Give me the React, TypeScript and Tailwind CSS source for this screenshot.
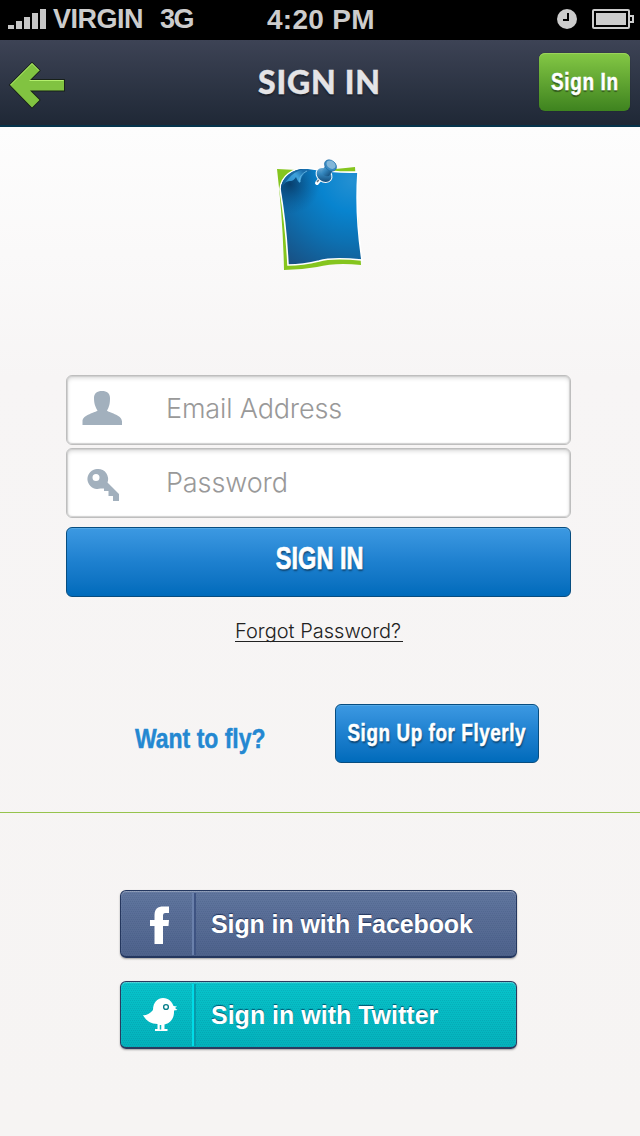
import React from "react";

const arial = "font-['Liberation_Sans',Arial,sans-serif]";
const narrow = `${arial} font-bold`;
const light = "font-['Inter','Roboto',sans-serif] font-light";

function StatusBar() {
  return (
    <div className={`flex h-10 items-start bg-black text-[27px] leading-[39px] font-bold text-[#cccccc] ${arial}`}>
      <svg className="mt-[9px] ml-2 h-5 w-[38px]" viewBox="0 0 38 20" fill="#c6c6c6" shapeRendering="crispEdges">
        <rect x="0" y="16" width="6" height="4" />
        <rect x="8" y="12" width="6" height="8" />
        <rect x="16" y="8" width="6" height="12" />
        <rect x="24" y="4" width="6" height="16" />
        <rect x="32" y="0" width="6" height="20" />
      </svg>
      <span className="ml-[7px] w-[107px] whitespace-nowrap tracking-[-0.5px]">VIRGIN</span>
      <span className="w-[107px] tracking-[-1.5px]">3G</span>
      <span className="w-[290px] text-[28px] whitespace-nowrap tracking-[0.3px]">4:20 PM</span>
      <svg className="mt-[9px] h-[21px] w-[21px]" viewBox="0 0 21 21">
        <circle cx="10" cy="10" r="10" fill="#cccccc" />
        <path d="M11 4V11H6" fill="none" stroke="#000" strokeWidth="2" />
      </svg>
      <svg className="mt-[9px] ml-[14px] h-[21px] w-[43px]" viewBox="0 0 43 21">
        <rect x="1" y="1" width="36" height="18" rx="1" fill="none" stroke="#cccccc" strokeWidth="2" />
        <rect x="4" y="4" width="30" height="12" fill="#cccccc" />
        <path d="M38 7h3v6h-3" fill="none" stroke="#cccccc" strokeWidth="2" />
      </svg>
    </div>
  );
}

function NavBar() {
  return (
    <header className="flex h-[87px] items-start border-b-2 border-[#06344c] bg-linear-to-b from-[#3d4355] to-[#1f2836]">
      <svg className="mt-[21px] ml-[8px] h-[48px] w-[60px]" viewBox="0 0 60 48">
        <path d="M2 24 24 2l7.500 7.500L22 19H56v10.500H22L31.500 39 24 46.500Z" fill="#81c341" stroke="#172018" strokeWidth="1.800" paintOrder="stroke" />
        <path d="M2.500 24 24 2.500l7 7M21.500 19.500H55.500" fill="none" stroke="#b4f06d" strokeWidth="1" />
      </svg>
      <h1 className="mt-[22px] ml-[190px] w-[281px] font-['Lato',sans-serif] text-[32px] leading-10 font-black tracking-[0.8px] whitespace-nowrap text-[#e4e4e6] text-shadow-[0_2px_2px_rgba(0,0,0,.4)] [-webkit-text-stroke:0.4px_#e4e4e6]">
        SIGN IN
      </h1>
      <button className={`mt-[13px] flex h-[58px] w-[91px] items-center justify-center rounded-[6px] bg-linear-to-b from-[#84c845] to-[#3e831f] text-[24px] whitespace-nowrap text-white shadow-[inset_0_1px_0_#9bd35b,0_0_1px_#172018] text-shadow-[0_2px_1px_rgba(0,0,0,.4)] ${narrow}`}>
        <span className="ml-px scale-x-[0.79] tracking-[0.8px] [-webkit-text-stroke:0.5px_#fff]">Sign In</span>
      </button>
    </header>
  );
}

function NoteLogo() {
  return (
    <svg className="mt-[28px] ml-[270px] h-[120px] w-[100px]" viewBox="270 155 100 120">
      <defs>
        <radialGradient id="paper" gradientUnits="userSpaceOnUse" cx="352" cy="180" r="105">
          <stop offset="0" stopColor="#2490d2" />
          <stop offset=".3" stopColor="#0884cf" />
          <stop offset=".6" stopColor="#0d70b1" />
          <stop offset="1" stopColor="#184f82" />
        </radialGradient>
        <linearGradient id="fold" gradientUnits="userSpaceOnUse" x1="282" y1="188" x2="303" y2="171">
          <stop offset="0" stopColor="#0d4f82" />
          <stop offset=".3" stopColor="#2b8fcf" />
          <stop offset=".7" stopColor="#3fa2db" />
          <stop offset="1" stopColor="#1a6dab" />
        </linearGradient>
        <radialGradient id="shade" gradientUnits="userSpaceOnUse" cx="290" cy="184" r="30">
          <stop offset="0" stopColor="#062f57" stopOpacity=".75" />
          <stop offset="1" stopColor="#0b4a80" stopOpacity="0" />
        </radialGradient>
        <linearGradient id="pin" x1="0" y1="0" x2="1" y2="1">
          <stop offset="0" stopColor="#8abde0" />
          <stop offset=".45" stopColor="#3487be" />
          <stop offset="1" stopColor="#07345e" />
        </linearGradient>
      </defs>
      <path d="M277 169q20 1 35 2 25-2 43-4l6 98q-25-3-44 2-17 3-33 3Q283 220 277 169Z" fill="#85c51e" />
      <path d="M280 189c1-13 13-21 26-21q30 5 52 4-3 42 4 88-30-3-43 1-16 4-31 4-2-40-8-76Z" fill="url(#paper)" stroke="#fff" strokeWidth="1.600" />
      <path d="M281 189c1-12 13-20 25-20q30 5 51 4l3 87q-30-3-42 1-16 3-29 3-2-40-8-75Z" fill="url(#shade)" />
      <path d="M281 190c0-11 9-20 22-21 4 0 7 1 9 2-6-.5-11 4-12 12-2-1-3-4-4-6-2 3-4 4.500-6 4-5 0-7 4-9 9Z" fill="url(#fold)" />
      <path d="M281 190c0-11 9-20 22-21-6 2-11 5-14 9-3 3-6 7-8 12Z" fill="#0b5089" opacity=".65" />
      <path d="M300 182c-1-4 1-8 7-11" fill="none" stroke="#69bde8" strokeWidth="1" opacity=".8" />
      <path d="m317 183 4-5" stroke="#fff" strokeWidth="4" strokeLinecap="round" />
      <path d="m317 182 5-6" stroke="#69747d" strokeWidth="1.500" />
      <ellipse cx="324" cy="175" rx="8.600" ry="6.800" transform="rotate(38 324 175)" fill="url(#pin)" stroke="#fff" strokeWidth="1" />
      <path d="m321 172 6-9 7 6-5 7q-6 1-8-4Z" fill="url(#pin)" />
      <ellipse cx="330.500" cy="165.500" rx="6.600" ry="5" transform="rotate(38 330.500 165.500)" fill="#3989c1" stroke="#1b6aa4" strokeWidth=".6" />
      <ellipse cx="331" cy="164.700" rx="5" ry="3.700" transform="rotate(38 331 164.700)" fill="#82b6d8" />
    </svg>
  );
}

function Field({ label, children, text }: { label: string; text: string; children: React.ReactNode }) {
  return (
    <label className="flex h-[70px] items-center rounded-[6px] border border-[#bebebe] bg-white px-px shadow-[inset_0_0_1px_1px_#d0d0d0,inset_0_2px_4px_#d8d8d8]">
      <span className="flex w-[98px] shrink-0 pl-[14px]">{children}</span>
      <span className={`text-[27px] leading-8 whitespace-nowrap text-[#999999] ${light} ${text}`}>{label}</span>
    </label>
  );
}

function SocialButton({ color, divider, label, text, children }: { color: string; divider: string; label: string; text: string; children: React.ReactNode }) {
  return (
    <button className={`relative flex h-[68px] w-[397px] items-center overflow-hidden rounded-[6px] border border-b-2 text-left shadow-[inset_0_1px_1px_rgba(255,255,255,.35),0_1px_2px_rgba(0,0,0,.35)] ${color}`}>
      <svg className="absolute inset-0 h-full w-full opacity-10">
        <defs>
          <pattern id="weave" width="4" height="4" patternUnits="userSpaceOnUse">
            <path d="M0 0h1v1H0zM2 0h1v1H2zM1 2h1v1H1zM3 2h1v1H3z" fill="#102f55" />
          </pattern>
        </defs>
        <rect width="100%" height="100%" fill="url(#weave)" />
      </svg>
      <span className="relative flex h-[66px] w-[71px] shrink-0">{children}</span>
      <span className={`relative h-[62px] w-[4px] shrink-0 border-x-2 ${divider}`} />
      <span className={`relative mt-[2px] ml-[15px] text-[25px] font-bold whitespace-nowrap text-white text-shadow-[0_-1px_1px_rgba(0,20,60,.6)] ${arial} ${text}`}>{label}</span>
    </button>
  );
}

const blueButton = "flex items-center justify-center rounded-[6px] border border-[#074d80] bg-linear-to-b from-[#3c99e2] via-[#1d80cf] to-[#006bbb] whitespace-nowrap text-white shadow-[inset_0_1px_0_#53a8e5] text-shadow-[1px_2px_2px_rgba(0,0,0,.45)]";

export default function App() {
  return (
    <div className="h-[1136px] w-[640px] overflow-hidden bg-[#f6f4f3]">
      <StatusBar />
      <NavBar />
      <main className="flex h-[1009px] flex-col bg-linear-to-b from-[#fdfdfd] via-[#f7f5f5] via-25% to-[#f6f4f3]">
        <NoteLogo />
        <section className="mt-[100px] ml-[66px] flex w-[505px] flex-col">
          <Field label="Email Address" text="-mt-[3px] tracking-[-0.15px]">
            <svg className="-mt-1 h-[35px] w-[40px]" viewBox="0 0 40 35" fill="#a2b0bd">
              <path d="M20 0c5 0 8 2.500 8 7 0 6-1 9-3 12.500 1 2 15 4 15 11V34H.500v-3.500c0-7 13.500-9 15-11C13.500 16 12 13 12 7c0-4.500 3-7 8-7Z" />
            </svg>
          </Field>
          <div className="h-[3px]" />
          <Field label="Password" text="-mt-[1px] tracking-[-0.1px]">
            <svg className="mt-1 ml-[5px] h-[33px] w-[33px]" viewBox="0 0 33 33" fill="#a2b0bd">
              <path fillRule="evenodd" d="M11 0a10 10 0 0 1 9.500 13.500L32 25v7h-6v-5h-4.500v-5H17v-2.500h-3.500A10 10 0 1 1 11 0ZM9 5a3.500 3.500 0 1 0 0 7 3.500 3.500 0 0 0 0-7Z" />
            </svg>
          </Field>
          <button className={`mt-[9px] h-[70px] pb-[5px] text-[31px] ${blueButton} ${narrow}`}>
            <span className="ml-[3px] scale-x-[0.76] [-webkit-text-stroke:0.7px_#fff]">SIGN IN</span>
          </button>
          <a className={`mt-[20px] ml-[169px] flex h-[25px] w-[168px] border-b border-[#222] text-[20px] leading-[28px] whitespace-nowrap text-[#222] ${light}`}>Forgot Password?</a>
        </section>
        <section className="mt-[62px] flex h-[59px] items-start">
          <span className={`mt-[17px] ml-[135px] w-[200px] origin-left scale-x-[0.82] text-[28px] leading-9 whitespace-nowrap text-[#2488d1] text-shadow-[0_0_3px_#fff] [-webkit-text-stroke:0.5px_#2488d1] ${narrow}`}>Want to fly?</span>
          <button className={`h-[59px] w-[204px] pb-[2px] text-[24px] ${blueButton} ${narrow}`}>
            <span className="scale-x-[0.785] tracking-[0.75px] [-webkit-text-stroke:0.5px_#fff]">Sign Up for Flyerly</span>
          </button>
        </section>
        <div className="mt-[49px] h-px shrink-0 bg-[#96c34d]" />
        <section className="mt-[77px] ml-[120px] flex flex-col gap-[23px]">
          <SocialButton label="Sign in with Facebook" text="tracking-[-0.1px]" color="border-[#24375f] bg-linear-to-b from-[#61769e] to-[#4f638c]" divider="border-l-[#6a80ab] border-r-[#3e5382]">
            <svg className="mt-[15px] ml-[29px] h-[39px] w-[20px]" viewBox="0 0 20 39" fill="#fff">
              <path d="M4.500 38V20H0v-6h4.500V9c0-6 3-8.500 9-8.500H19v6.500h-3.500c-2 0-2.500 1-2.500 3v4h6l-.500 6H13v18Z" />
            </svg>
          </SocialButton>
          <SocialButton label="Sign in with Twitter" text="" color="border-[#2b3a5f] bg-linear-to-b from-[#08c4cb] to-[#04b2bc]" divider="border-l-[#00dce7] border-r-[#079aab]">
            <svg className="mt-[15px] ml-[22px] h-[35px] w-[35px]" viewBox="0 0 35 35">
              <path d="M0 18q5 1 10-5C10 5 15 1 20 1c6 0 9 4 10.500 8l3.500.500-2 1.500 2.500 2-3.500.500c.5 8-4 13-9.500 14v4.500h3v2H12v-2h2.500V27C8 27 3 24 0 18Z" fill="#fff" />
              <path d="M17.500 28v4.500" stroke="#08b8c1" strokeWidth="1.500" />
              <circle cx="23" cy="10" r="2.400" fill="#fff" stroke="#087f8b" strokeWidth="1.400" />
            </svg>
          </SocialButton>
        </section>
      </main>
    </div>
  );
}
